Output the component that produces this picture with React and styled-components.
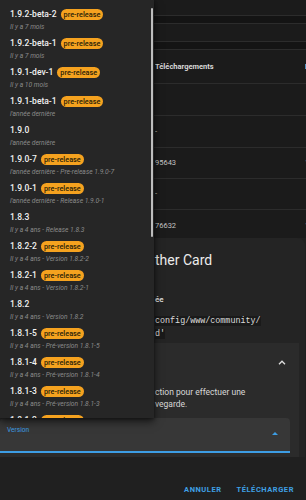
import React from "react";
import styled, { createGlobalStyle } from "styled-components";

const GlobalStyle = createGlobalStyle`
  html, body {
    margin: 0;
    padding: 0;
    background: #202020;
  }
  * {
    box-sizing: border-box;
  }
`;

const Screen = styled.div`
  position: relative;
  width: 306px;
  height: 500px;
  overflow: hidden;
  background: #202020;
  font-family: Roboto, "Liberation Sans", sans-serif;
  color: #d4d4d4;
`;

/* table behind the menu */
const Table = styled.div`
  background: #1b1b1b;
`;

const TableRow = styled.div`
  display: grid;
  grid-template-columns: 155px 150px 1fr;
  align-items: center;
  height: ${(p) => p.$h}px;
  padding-top: ${(p) => p.$pt || 0}px;
  background: ${(p) => (p.$band ? "#141414" : "#1b1b1b")};
  border-bottom: ${(p) => (p.$last ? "none" : "1px solid #2c2c2c")};
`;

const Cell = styled.div`
  grid-column: ${(p) => p.$col};
  font-size: 7.5px;
  line-height: 10px;
  white-space: nowrap;
  overflow: hidden;
  color: ${(p) => (p.$head ? "#d8d8d8" : "#c4c4c4")};
  font-weight: ${(p) => (p.$head ? 700 : 400)};
`;

/* card */
const Card = styled.div`
  margin-right: 1px;
  height: 219px;
  background: #242424;
  border-radius: 0 8px 0 0;
  padding-top: 12px;
`;

const Indent = styled.div`
  padding-left: 155px;
`;

const Heading = styled.div`
  font-size: 14px;
  line-height: 20px;
  color: #ececec;
  white-space: nowrap;
`;

const Label = styled.div`
  margin-top: 24px;
  font-size: 8px;
  line-height: 12px;
  font-weight: 700;
  color: #d6d6d6;
`;

const Code = styled.div`
  margin-top: 9px;
  font-family: "Liberation Mono", "DejaVu Sans Mono", monospace;
  font-size: 8.4px;
  line-height: 13px;
  color: #dcdcdc;
  white-space: nowrap;

  span {
    background: #1a1a1a;
  }
`;

const Panel = styled.div`
  margin: 2px 6px 0 0;
  height: 114px;
  background: #2b2b2b;
  padding-bottom: 4px;
`;

const PanelHeader = styled.div`
  display: flex;
  justify-content: flex-end;
  align-items: center;
  height: 38px;
  padding-right: 13px;
`;

const PanelText = styled.div`
  margin-top: 5px;
  padding-left: 155px;
  font-size: 8.5px;
  line-height: 12px;
  color: #d8d8d8;
  white-space: nowrap;
`;

const Field = styled.div`
  display: flex;
  justify-content: space-between;
  align-items: flex-start;
  margin: 8px 9px 0 0;
  height: 35px;
  padding: 8px 12px 0 7px;
  background: #373737;
  border-radius: 4px 4px 0 0;
  border-bottom: 2px solid #3d9de4;
`;

const FieldLabel = styled.div`
  font-size: 6.6px;
  line-height: 9px;
  color: #3d9de4;
`;

const Caret = styled.svg`
  margin-top: 6px;
`;

const Actions = styled.div`
  display: flex;
  justify-content: flex-end;
  gap: 15px;
  padding: 27px 12px 0 0;
`;

const TextButton = styled.button`
  border: none;
  background: none;
  padding: 0;
  font-family: Roboto, "Liberation Sans", sans-serif;
  font-size: 7.5px;
  line-height: 12px;
  font-weight: 700;
  letter-spacing: 0.55px;
  color: #3fa0e6;
  cursor: pointer;
`;

/* dropdown menu */
const Menu = styled.div`
  position: absolute;
  top: 0;
  left: 0;
  width: 154px;
  height: 418px;
  padding-top: 6px;
  background: #262626;
  box-shadow: 0 4px 8px rgba(0, 0, 0, 0.55), 0 1px 3px rgba(0, 0, 0, 0.4);
  overflow: hidden;
`;

const Thumb = styled.div`
  position: absolute;
  top: 8px;
  right: 1px;
  width: 2px;
  height: 229px;
  border-radius: 1px;
  background: #bdbdbd;
`;

const Item = styled.div`
  height: 29px;
  padding: 2px 10px;
`;

const ItemTitle = styled.div`
  display: flex;
  align-items: center;
  gap: 4px;
  height: 12.5px;
  font-size: 8.5px;
  font-weight: 500;
  color: #f2f2f2;
  white-space: nowrap;
`;

const Badge = styled.span`
  display: inline-flex;
  align-items: center;
  height: 11px;
  padding: 0 3px;
  border-radius: 6px;
  background: #f5a21f;
  color: #2a1d08;
  font-size: 7.3px;
  font-weight: 500;
`;

const ItemSub = styled.div`
  height: 12.5px;
  line-height: 12.5px;
  font-size: 6.7px;
  font-style: italic;
  color: #8a8a8a;
  white-space: nowrap;
`;

const versions = [
  ["1.9.2-beta-2", true, "Il y a 7 mois"],
  ["1.9.2-beta-1", true, "Il y a 7 mois"],
  ["1.9.1-dev-1", true, "Il y a 10 mois"],
  ["1.9.1-beta-1", true, "l'année dernière"],
  ["1.9.0", false, "l'année dernière"],
  ["1.9.0-7", true, "l'année dernière - Pre-release 1.9.0-7"],
  ["1.9.0-1", true, "l'année dernière - Release 1.9.0-1"],
  ["1.8.3", false, "Il y a 4 ans - Release 1.8.3"],
  ["1.8.2-2", true, "Il y a 4 ans - Version 1.8.2-2"],
  ["1.8.2-1", true, "Il y a 4 ans - Version 1.8.2-1"],
  ["1.8.2", false, "Il y a 4 ans - Version 1.8.2"],
  ["1.8.1-5", true, "Il y a 4 ans - Pré-version 1.8.1-5"],
  ["1.8.1-4", true, "Il y a 4 ans - Pré-version 1.8.1-4"],
  ["1.8.1-3", true, "Il y a 4 ans - Pré-version 1.8.1-3"],
  ["1.8.1-2", true, "Il y a 4 ans - Pré-version 1.8.1-2"],
];

const rows = [
  { h: 16 },
  { h: 8, band: true },
  { h: 18 },
  { h: 8, band: true },
  { h: 34, head: true, cells: ["Téléchargements", "D"] },
  { h: 32 },
  { h: 32, cells: ["-"] },
  { h: 31, cells: ["95643", "1"] },
  { h: 31, cells: ["-"] },
  { h: 28, pt: 4, last: true, cells: ["76632", "1"] },
];

export default function App() {
  return (
    <Screen>
      <GlobalStyle />
      <Table>
        {rows.map((r, i) => (
          <TableRow key={i} $h={r.h} $band={r.band} $pt={r.pt} $last={r.last}>
            {(r.cells || []).map((c, j) => (
              <Cell key={j} $col={j + 2} $head={r.head}>
                {c}
              </Cell>
            ))}
          </TableRow>
        ))}
      </Table>

      <Card>
        <Indent>
          <Heading>ther Card</Heading>
          <Label>ée</Label>
          <Code>
            <div>
              <span>config/www/community/</span>
            </div>
            <div>
              <span>d'</span>
            </div>
          </Code>
        </Indent>
        <Panel>
          <PanelHeader>
            <svg width="8" height="5" viewBox="0 0 8 5">
              <polyline
                points="1,4.2 4,1.2 7,4.2"
                fill="none"
                stroke="#e0e0e0"
                strokeWidth="1.3"
              />
            </svg>
          </PanelHeader>
          <PanelText>
            <div>ction pour effectuer une</div>
            <div>vegarde.</div>
          </PanelText>
          <Field>
            <FieldLabel>Version</FieldLabel>
            <Caret width="6" height="3" viewBox="0 0 6 3">
              <polygon points="0,3 3,0 6,3" fill="#3d9de4" />
            </Caret>
          </Field>
        </Panel>
      </Card>

      <Actions>
        <TextButton>ANNULER</TextButton>
        <TextButton>TÉLÉCHARGER</TextButton>
      </Actions>

      <Menu>
        <Thumb />
        {versions.map(([name, pre, sub]) => (
          <Item key={name}>
            <ItemTitle>
              {name}
              {pre && <Badge>pre-release</Badge>}
            </ItemTitle>
            <ItemSub>{sub}</ItemSub>
          </Item>
        ))}
      </Menu>
    </Screen>
  );
}
